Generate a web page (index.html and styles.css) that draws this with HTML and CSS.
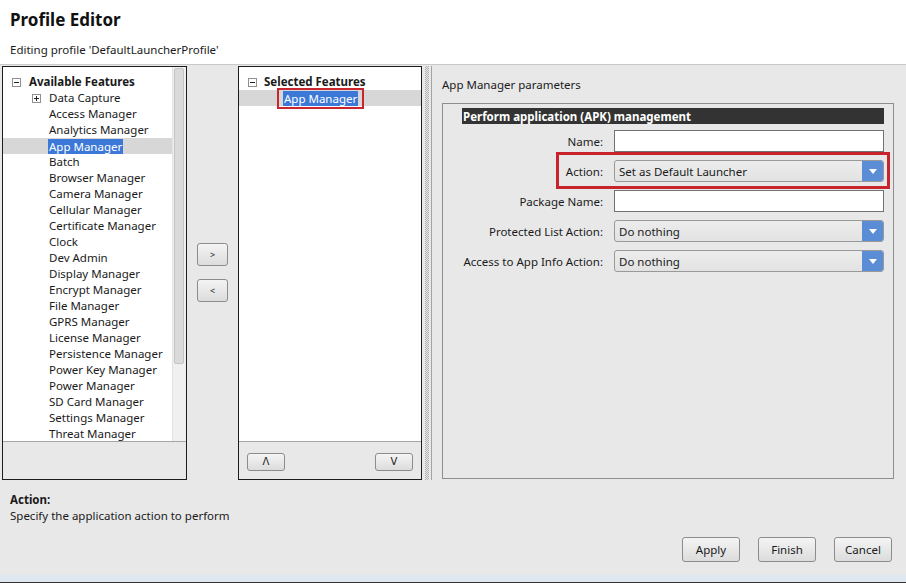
FILE: index.html
```html
<!DOCTYPE html>
<html>

<head>
	<meta charset="UTF-8">
	<meta name="viewport" content="width=device-width, initial-scale=1">
	<title>Profile Editor</title>
	<link rel="stylesheet" href="styles.css">
</head>

<body>
	<div class="header">
		<p class="title">Profile Editor</p>
		<p class="subtitle">Editing profile 'DefaultLauncherProfile'</p>
	</div>

	<main class="content">
		<section class="tree-panel">
			<div class="tree-view">
				<ul class="tree">
					<li class="root">
						<svg class="toggle" width="9" height="9" viewBox="0 0 9 9"><rect x="0.5" y="0.5" width="8" height="8" fill="#fff" stroke="#8f8f8f"/><path d="M2 4.5h5" stroke="#222"/></svg>
						<b>Available Features</b>
					</li>
					<li class="child">
						<svg class="toggle" width="9" height="9" viewBox="0 0 9 9"><rect x="0.5" y="0.5" width="8" height="8" fill="#fff" stroke="#8f8f8f"/><path d="M2 4.5h5M4.5 2v5" stroke="#222"/></svg>
						Data Capture
					</li>
					<li class="leaf">Access Manager</li>
					<li class="leaf">Analytics Manager</li>
					<li class="leaf selected"><span class="hl">App Manager</span></li>
					<li class="leaf">Batch</li>
					<li class="leaf">Browser Manager</li>
					<li class="leaf">Camera Manager</li>
					<li class="leaf">Cellular Manager</li>
					<li class="leaf">Certificate Manager</li>
					<li class="leaf">Clock</li>
					<li class="leaf">Dev Admin</li>
					<li class="leaf">Display Manager</li>
					<li class="leaf">Encrypt Manager</li>
					<li class="leaf">File Manager</li>
					<li class="leaf">GPRS Manager</li>
					<li class="leaf">License Manager</li>
					<li class="leaf">Persistence Manager</li>
					<li class="leaf">Power Key Manager</li>
					<li class="leaf">Power Manager</li>
					<li class="leaf">SD Card Manager</li>
					<li class="leaf">Settings Manager</li>
					<li class="leaf">Threat Manager</li>
				</ul>
				<div class="scrollbar"><div class="thumb"></div></div>
			</div>
			<div class="panel-footer"></div>
		</section>

		<div class="mover">
			<button class="small-button">&gt;</button>
			<button class="small-button">&lt;</button>
		</div>

		<section class="selected-panel">
			<div class="tree-view">
				<ul class="tree">
					<li class="root selected-root">
						<svg class="toggle" width="9" height="9" viewBox="0 0 9 9"><rect x="0.5" y="0.5" width="8" height="8" fill="#fff" stroke="#8f8f8f"/><path d="M2 4.5h5" stroke="#222"/></svg>
						<b>Selected Features</b>
					</li>
					<li class="picked selected"><span class="hl callout-item">App Manager</span></li>
				</ul>
			</div>
			<div class="panel-footer list-footer">
				<button class="order-button">&Lambda;</button>
				<button class="order-button">V</button>
			</div>
		</section>

		<div class="sash"><div class="sash-dots"></div></div>

		<section class="params-panel">
			<p class="params-title">App Manager parameters</p>
			<div class="group">
				<div class="group-bar">Perform application (APK) management</div>
				<div class="form">
					<label>Name:</label>
					<div class="text-input"></div>

					<label>Action:</label>
					<div class="select"><span>Set as Default Launcher</span><span class="arrow"></span></div>

					<label>Package Name:</label>
					<div class="text-input"></div>

					<label>Protected List Action:</label>
					<div class="select"><span>Do nothing</span><span class="arrow"></span></div>

					<label>Access to App Info Action:</label>
					<div class="select"><span>Do nothing</span><span class="arrow"></span></div>
				</div>
				<div class="callout"></div>
			</div>
		</section>
	</main>

	<div class="footer">
		<p class="help-title">Action:</p>
		<p class="help">Specify the application action to perform</p>
		<div class="actions">
			<button class="dialog-button">Apply</button>
			<button class="dialog-button">Finish</button>
			<button class="dialog-button">Cancel</button>
		</div>
	</div>
	<div class="status-strip"></div>
</body>

</html>
```

FILE: styles.css
```css
* {
	box-sizing: border-box;
}

body {
	margin: 0;
	width: 906px;
	height: 583px;
	overflow: hidden;
	background-color: #e8e8e8;
	font-family: "Noto Sans", "Open Sans", Arial, sans-serif;
	font-size: 11.5px;
	color: #1a1a1a;
}

p {
	margin: 0;
}

button {
	font-family: inherit;
	color: #1a1a1a;
	padding: 0;
	cursor: pointer;
}

.header {
	height: 65px;
	background-color: white;
	border-bottom: 1px solid #c9c9c9;
	padding: 9px 10px 0;
}

.title {
	font-size: 17px;
	font-weight: bold;
	line-height: 22px;
	color: #111;
}

.subtitle {
	margin-top: 11px;
	line-height: 16px;
}

.content {
	display: flex;
	height: 415px;
	padding: 1px 0 0 2px;
}

/* tree panels */
.tree-panel,
.selected-panel {
	display: flex;
	flex-direction: column;
	border: 1px solid #1c1c1c;
}

.tree-panel {
	width: 185px;
}

.selected-panel {
	width: 184px;
}

.tree-view {
	height: 375px;
	display: flex;
	overflow: hidden;
	background-color: white;
	border-bottom: 1px solid #a5a5a5;
}

.panel-footer {
	flex: 1;
}

.tree {
	list-style: none;
	margin: 0;
	padding: 7px 0 0;
	flex: 1;
}

.tree li {
	height: 16px;
	line-height: 16px;
	display: flex;
	align-items: center;
	white-space: nowrap;
}

.tree .toggle {
	flex: none;
	margin-right: 8px;
}

.tree .root {
	padding-left: 9px;
}

.tree .selected-root .toggle {
	margin-right: 7px;
}

.tree .child {
	padding-left: 29px;
}

.tree .leaf {
	padding-left: 46px;
}

.tree .leaf .hl {
	margin-left: -1px;
}

.tree .picked {
	padding-left: 44px;
}

.tree .selected {
	background-color: #d7d7d7;
}

.hl {
	background-color: #3b78d8;
	color: white;
	padding: 0 1px;
	line-height: 15px;
}

.callout-item {
	position: relative;
}

.callout-item::after {
	content: '';
	position: absolute;
	top: -3px;
	bottom: -3px;
	left: -6px;
	right: -6px;
	border: 2px solid #c9252f;
}

.scrollbar {
	width: 14px;
	background-color: #f0f0f0;
	border-left: 1px solid #e2e2e2;
	padding: 1px 2px 0 1px;
}

.thumb {
	height: 296px;
	background-color: #dadada;
	border: 1px solid #c4c4c4;
	border-radius: 2px;
}

.mover {
	width: 51px;
	display: flex;
	flex-direction: column;
	align-items: flex-start;
	gap: 13px;
	padding: 177px 0 0 10px;
}

.small-button,
.order-button,
.dialog-button {
	border: 1px solid #8c8c8c;
	border-radius: 3px;
	background: linear-gradient(#f4f4f4, #dcdcdc);
}

.small-button {
	width: 31px;
	height: 23px;
	font-size: 9px;
}

.list-footer {
	display: flex;
	justify-content: space-between;
	align-items: flex-start;
	padding: 11px 8px 0 8px;
}

.order-button {
	width: 38px;
	height: 18px;
	font-size: 10px;
	line-height: 16px;
	font-family: "DejaVu Sans", sans-serif;
}

.sash {
	width: 9px;
	padding: 0 2px 0 3px;
}

.sash-dots {
	height: 100%;
	background: repeating-conic-gradient(#b2b2b2 0 25%, transparent 0 50%) 0 0 / 2px 2px;
}

/* parameters */
.params-panel {
	flex: 1;
	display: flex;
	flex-direction: column;
	border-left: 1px solid #a3a3a3;
	padding: 11px 12px 1px 10px;
}

.params-title {
	line-height: 16px;
}

.group {
	flex: 1;
	margin-top: 10px;
	position: relative;
	border: 1px solid #8d8d8d;
	padding: 4px 9px 0 19px;
}

.group-bar {
	height: 16px;
	line-height: 17px;
	background-color: #333;
	color: white;
	font-weight: bold;
	padding-left: 1px;
}

.form {
	display: grid;
	grid-template-columns: 141px 1fr;
	grid-auto-rows: 22px;
	column-gap: 11px;
	row-gap: 8px;
	align-items: center;
	margin-top: 6px;
}

.form label {
	text-align: right;
}

.text-input {
	height: 22px;
	background-color: white;
	border: 1px solid #717171;
}

.select {
	height: 22px;
	display: flex;
	align-items: center;
	justify-content: space-between;
	border: 1px solid #999;
	border-radius: 3px;
	background: linear-gradient(#ececec, #e2e2e2);
	padding-left: 4px;
}

.select .arrow {
	width: 21px;
	height: 20px;
	background-color: #5b8dd6;
	border-radius: 0 2px 2px 0;
	position: relative;
}

.select .arrow::after {
	content: '';
	position: absolute;
	left: 7px;
	top: 8px;
	border-left: 4px solid transparent;
	border-right: 4px solid transparent;
	border-top: 5px solid white;
}

.callout {
	position: absolute;
	left: 113px;
	top: 48px;
	width: 334px;
	height: 37px;
	border: 3px solid #c8242e;
}

/* bottom */
.footer {
	height: 95px;
	padding: 12px 14px 0 10px;
}

.help-title {
	font-weight: bold;
	line-height: 16px;
}

.help {
	line-height: 16px;
}

.actions {
	display: flex;
	justify-content: flex-end;
	gap: 18px;
	margin-top: 13px;
}

.dialog-button {
	width: 58px;
	height: 25px;
	font-size: 11.5px;
}

.status-strip {
	height: 8px;
	background-color: #dfe8f1;
	border-bottom: 1px solid #333;
}
```
